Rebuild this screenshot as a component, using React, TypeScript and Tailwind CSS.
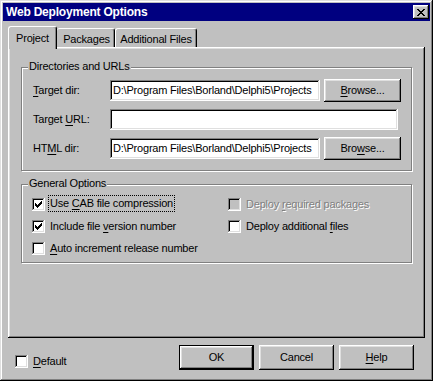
import type { ReactNode } from "react";

// Win95 bevels
const raised =
  "shadow-[inset_-1px_-1px_#000,inset_1px_1px_#fff,inset_-2px_-2px_#808080,inset_2px_2px_#dfdfdf]";
const sunken =
  "shadow-[inset_-1px_-1px_#fff,inset_1px_1px_#808080,inset_-2px_-2px_#dfdfdf,inset_2px_2px_#000]";
const frame =
  "shadow-[inset_-1px_-1px_#000,inset_1px_1px_#dfdfdf,inset_-2px_-2px_#808080,inset_2px_2px_#fff]";

// underlined access key
const U = ({ children }: { children: ReactNode }) => (
  <span className="underline underline-offset-[2px] decoration-1">{children}</span>
);

const CheckMark = () => (
  <svg width="7" height="7" viewBox="0 0 7 7" shapeRendering="crispEdges">
    <path
      fill="#000"
      d="M6 0h1v1h-1z M5 1h2v1h-2z M0 2h1v1h-1z M4 2h3v1h-3z M0 3h2v1h-2z M3 3h3v1h-3z M0 4h5v1h-5z M1 5h3v1h-3z M2 6h1v1h-1z"
    />
  </svg>
);

const CloseGlyph = () => (
  <svg width="8" height="7" viewBox="0 0 8 7" shapeRendering="crispEdges">
    <path
      fill="#000"
      d="M0 0h2v1h-2z M6 0h2v1h-2z M1 1h2v1h-2z M5 1h2v1h-2z M2 2h4v1h-4z M3 3h2v1h-2z M2 4h4v1h-4z M1 5h2v1h-2z M5 5h2v1h-2z M0 6h2v1h-2z M6 6h2v1h-2z"
    />
  </svg>
);

interface CheckProps {
  checked?: boolean;
  disabled?: boolean;
  focused?: boolean;
  children: ReactNode;
}

const CheckBox = ({ checked, disabled, focused, children }: CheckProps) => (
  <div className="flex items-center h-[13px]">
    <span
      className={`w-[13px] h-[13px] shrink-0 flex items-center justify-center ${
        disabled ? "bg-[#c0c0c0]" : "bg-white"
      } ${sunken}`}
    >
      {checked && <CheckMark />}
    </span>
    {focused ? (
      <span className="ml-[4px] px-[1px] leading-[15px] -mt-[3px] outline-1 outline-dotted outline-black whitespace-nowrap">
        {children}
      </span>
    ) : (
      <span
        className={`ml-[5px] leading-[13px] -mt-[1px] whitespace-nowrap ${
          disabled ? "text-[#808080] [text-shadow:1px_1px_0_#fff]" : ""
        }`}
      >
        {children}
      </span>
    )}
  </div>
);

const Button = ({
  children,
  className = "",
  isDefault,
}: {
  children: ReactNode;
  className?: string;
  isDefault?: boolean;
}) => (
  <button
    className={`flex items-center justify-center bg-[#c0c0c0] ${raised} ${
      isDefault ? "border border-black" : ""
    } ${className}`}
  >
    {children}
  </button>
);

const Edit = ({ value = "", className = "" }: { value?: string; className?: string }) => (
  <div
    className={`h-[21px] bg-white flex items-center pl-[3px] overflow-hidden whitespace-nowrap ${sunken} ${className}`}
  >
    {value}
  </div>
);

const Group = ({
  label,
  className = "",
  children,
}: {
  label: string;
  className?: string;
  children: ReactNode;
}) => (
  <div
    className={`relative w-[391px] border border-[#808080] shadow-[inset_1px_1px_#fff,1px_1px_#fff] ${className}`}
  >
    <span className="absolute left-[6px] -top-[8px] px-[1px] leading-[13px] bg-[#c0c0c0] whitespace-nowrap">
      {label}
    </span>
    {children}
  </div>
);

const path = "D:\\Program Files\\Borland\\Delphi5\\Projects";

const App = () => {
  return (
    <div
      className={`w-[433px] h-[381px] bg-[#c0c0c0] p-[3px] flex flex-col font-['Liberation_Sans',Arial,sans-serif] text-[11px] tracking-[-0.2px] text-black ${frame}`}
    >
      {/* Title bar */}
      <div className="h-[18px] shrink-0 bg-[#000080] flex items-center justify-between pl-[3px] pr-[1px]">
        <span className="text-white font-bold text-[12px] tracking-[-0.2px]">
          Web Deployment Options
        </span>
        <button className={`w-[16px] h-[14px] flex items-center justify-center bg-[#c0c0c0] ${raised}`}>
          <CloseGlyph />
        </button>
      </div>

      {/* Tabs */}
      <div className="flex items-end h-[21px] mt-[5px] ml-[5px] shrink-0">
        <div className="relative z-10 w-[49px] h-[23px] -mb-[2px] bg-[#c0c0c0] rounded-t-[3px] border-l border-t border-white border-r border-r-black shadow-[inset_-1px_0_#808080] flex justify-center pt-[3px]">
          Project
        </div>
        <div className="w-[58px] h-[19px] rounded-t-[3px] border-t border-white border-r border-r-black shadow-[inset_-1px_0_#808080] flex justify-center pt-[2px] pl-[2px]">
          Packages
        </div>
        <div className="w-[82px] h-[19px] rounded-t-[3px] border-l border-t border-white border-r border-r-black shadow-[inset_-1px_0_#808080] flex justify-center pt-[2px]">
          Additional Files
        </div>
      </div>

      {/* Tab page */}
      <div className={`w-[417px] h-[291px] ml-[5px] shrink-0 pt-[20px] pl-[13px] flex flex-col ${raised}`}>
        <Group label="Directories and URLs" className="h-[104px] pt-[12px] pl-[11px]">
          <div className="flex flex-col gap-[8px]">
            <div className="flex items-center h-[21px]">
              <span className="w-[77px]">
                <U>T</U>arget dir:
              </span>
              <Edit value={path} className="w-[210px]" />
              <Button className="ml-[4px] w-[77px] h-[23px] shrink-0">
                <span>
                  <U>B</U>rowse...
                </span>
              </Button>
            </div>
            <div className="flex items-center h-[21px]">
              <span className="w-[77px]">
                Target <U>U</U>RL:
              </span>
              <Edit className="w-[288px]" />
            </div>
            <div className="flex items-center h-[21px]">
              <span className="w-[77px]">
                HT<U>M</U>L dir:
              </span>
              <Edit value={path} className="w-[210px]" />
              <Button className="ml-[4px] w-[77px] h-[23px] shrink-0">
                <span>
                  Bro<U>w</U>se...
                </span>
              </Button>
            </div>
          </div>
        </Group>

        <Group label="General Options" className="h-[79px] mt-[13px] pt-[13px] pl-[10px]">
          <div className="flex">
            <div className="w-[196px] flex flex-col gap-[9px]">
              <CheckBox checked focused>
                Use <U>C</U>AB file compression
              </CheckBox>
              <CheckBox checked>
                Include file <U>v</U>ersion number
              </CheckBox>
              <CheckBox>
                <U>A</U>uto increment release number
              </CheckBox>
            </div>
            <div className="flex flex-col gap-[9px]">
              <CheckBox disabled>
                Deploy <U>r</U>equired packages
              </CheckBox>
              <CheckBox>
                Deploy additional <U>f</U>iles
              </CheckBox>
            </div>
          </div>
        </Group>
      </div>

      {/* Footer */}
      <div className="flex items-end mt-[7px] h-[25px] pl-[12px] pr-[16px] shrink-0">
        <div className="mb-[2px]">
          <CheckBox>
            <U>D</U>efault
          </CheckBox>
        </div>
        <div className="ml-auto flex gap-[5px]">
          <Button isDefault className="w-[75px] h-[25px]">
            OK
          </Button>
          <Button className="w-[75px] h-[25px]">Cancel</Button>
          <Button className="w-[75px] h-[25px]">
            <span>
              <U>H</U>elp
            </span>
          </Button>
        </div>
      </div>
    </div>
  );
};

export default App;
